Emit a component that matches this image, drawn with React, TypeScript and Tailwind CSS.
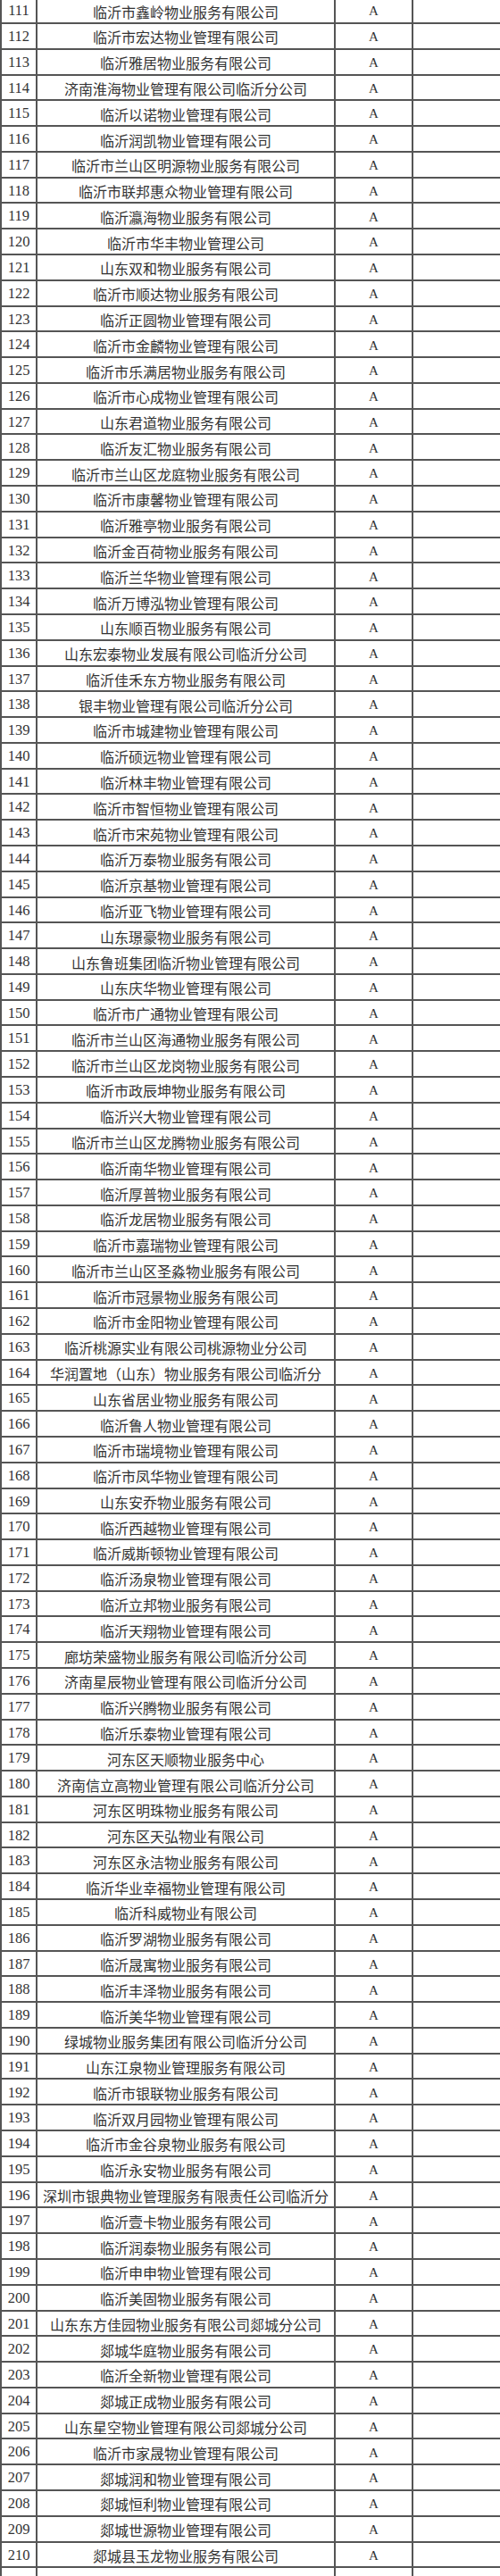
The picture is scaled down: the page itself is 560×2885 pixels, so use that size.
const companies: string[] = [
  "临沂市鑫岭物业服务有限公司",
  "临沂市宏达物业管理有限公司",
  "临沂雅居物业服务有限公司",
  "济南淮海物业管理有限公司临沂分公司",
  "临沂以诺物业管理有限公司",
  "临沂润凯物业管理有限公司",
  "临沂市兰山区明源物业服务有限公司",
  "临沂市联邦惠众物业管理有限公司",
  "临沂瀛海物业服务有限公司",
  "临沂市华丰物业管理公司",
  "山东双和物业服务有限公司",
  "临沂市顺达物业服务有限公司",
  "临沂正圆物业管理有限公司",
  "临沂市金麟物业管理有限公司",
  "临沂市乐满居物业服务有限公司",
  "临沂市心成物业管理有限公司",
  "山东君道物业服务有限公司",
  "临沂友汇物业服务有限公司",
  "临沂市兰山区龙庭物业服务有限公司",
  "临沂市康馨物业管理有限公司",
  "临沂雅亭物业服务有限公司",
  "临沂金百荷物业服务有限公司",
  "临沂兰华物业管理有限公司",
  "临沂万博泓物业管理有限公司",
  "山东顺百物业服务有限公司",
  "山东宏泰物业发展有限公司临沂分公司",
  "临沂佳禾东方物业服务有限公司",
  "银丰物业管理有限公司临沂分公司",
  "临沂市城建物业管理有限公司",
  "临沂硕远物业管理有限公司",
  "临沂林丰物业管理有限公司",
  "临沂市智恒物业管理有限公司",
  "临沂市宋苑物业管理有限公司",
  "临沂万泰物业服务有限公司",
  "临沂京基物业管理有限公司",
  "临沂亚飞物业管理有限公司",
  "山东璟豪物业服务有限公司",
  "山东鲁班集团临沂物业管理有限公司",
  "山东庆华物业管理有限公司",
  "临沂市广通物业管理有限公司",
  "临沂市兰山区海通物业服务有限公司",
  "临沂市兰山区龙岗物业服务有限公司",
  "临沂市政辰坤物业服务有限公司",
  "临沂兴大物业管理有限公司",
  "临沂市兰山区龙腾物业服务有限公司",
  "临沂南华物业管理有限公司",
  "临沂厚普物业服务有限公司",
  "临沂龙居物业服务有限公司",
  "临沂市嘉瑞物业管理有限公司",
  "临沂市兰山区圣淼物业服务有限公司",
  "临沂市冠景物业服务有限公司",
  "临沂市金阳物业管理有限公司",
  "临沂桃源实业有限公司桃源物业分公司",
  "华润置地（山东）物业服务有限公司临沂分",
  "山东省居业物业服务有限公司",
  "临沂鲁人物业管理有限公司",
  "临沂市瑞境物业管理有限公司",
  "临沂市凤华物业管理有限公司",
  "山东安乔物业服务有限公司",
  "临沂西越物业管理有限公司",
  "临沂威斯顿物业管理有限公司",
  "临沂汤泉物业管理有限公司",
  "临沂立邦物业服务有限公司",
  "临沂天翔物业管理有限公司",
  "廊坊荣盛物业服务有限公司临沂分公司",
  "济南星辰物业管理有限公司临沂分公司",
  "临沂兴腾物业服务有限公司",
  "临沂乐泰物业管理有限公司",
  "河东区天顺物业服务中心",
  "济南信立高物业管理有限公司临沂分公司",
  "河东区明珠物业服务有限公司",
  "河东区天弘物业有限公司",
  "河东区永洁物业服务有限公司",
  "临沂华业幸福物业管理有限公司",
  "临沂科威物业有限公司",
  "临沂罗湖物业服务有限公司",
  "临沂晟寓物业服务有限公司",
  "临沂丰泽物业服务有限公司",
  "临沂美华物业管理有限公司",
  "绿城物业服务集团有限公司临沂分公司",
  "山东江泉物业管理服务有限公司",
  "临沂市银联物业服务有限公司",
  "临沂双月园物业管理有限公司",
  "临沂市金谷泉物业服务有限公司",
  "临沂永安物业服务有限公司",
  "深圳市银典物业管理服务有限责任公司临沂分",
  "临沂壹卡物业服务有限公司",
  "临沂润泰物业服务有限公司",
  "临沂申申物业管理有限公司",
  "临沂美固物业服务有限公司",
  "山东东方佳园物业服务有限公司郯城分公司",
  "郯城华庭物业服务有限公司",
  "临沂全新物业管理有限公司",
  "郯城正成物业服务有限公司",
  "山东星空物业管理有限公司郯城分公司",
  "临沂市家晟物业管理有限公司",
  "郯城润和物业管理有限公司",
  "郯城恒利物业管理有限公司",
  "郯城世源物业管理有限公司",
  "郯城县玉龙物业服务有限公司",
];

function Row({ no, name, grade }: { no?: number; name?: string; grade?: string }) {
  return (
    <div className="flex h-[28.795px] border-b-2 border-[#555] border-l-2">
      <div className="flex w-[40px] shrink-0 items-center justify-center border-r-2 border-[#555] pt-[2px] font-['Liberation_Serif',serif] text-[16.5px] text-[#333]">
        {no}
      </div>
      <div className="flex w-[334px] shrink-0 items-center justify-center overflow-hidden whitespace-nowrap border-r-2 border-[#555] pt-[2px] font-['Noto_Sans_CJK_SC',sans-serif] text-[16px] text-[#333]">
        {name}
      </div>
      <div className="flex w-[87px] shrink-0 items-center justify-center border-r-2 border-[#555] pt-[2px] font-['Liberation_Serif',serif] text-[15px] text-[#333]">
        {grade}
      </div>
      <div className="flex-1" />
    </div>
  );
}

export default function App() {
  return (
    <div className="h-[2885px] overflow-hidden bg-white">
      <div className="-mt-[1.8px]">
        {companies.map((name, i) => (
          <Row key={i} no={111 + i} name={name} grade="A" />
        ))}
        <Row />
      </div>
    </div>
  );
}
